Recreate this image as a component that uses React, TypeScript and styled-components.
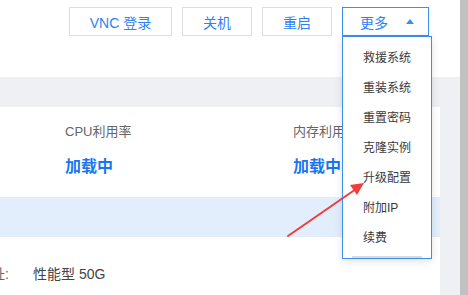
import React, { FC } from 'react';
import styled, { createGlobalStyle } from 'styled-components';

const GlobalStyle = createGlobalStyle`
  html, body {
    margin: 0;
    padding: 0;
    background: #fff;
  }
  body {
    font-family: "Liberation Sans", "Noto Sans CJK SC", sans-serif;
  }
`;

const menuItems = ['救援系统', '重装系统', '重置密码', '克隆实例', '升级配置', '附加IP', '续费'];

const stats = [
  { label: 'CPU利用率', value: '加载中' },
  { label: '内存利用率', value: '加载中' },
];

const App: FC = () => {
  return (
    <Page>
      <GlobalStyle />
      <Main>
        <Toolbar>
          <ActionButton $w={103}>VNC 登录</ActionButton>
          <ActionButton $w={70}>关机</ActionButton>
          <ActionButton $w={70}>重启</ActionButton>
          <MoreWrap>
            <ActionButton $w={87} $active>
              <span>更多</span>
              <Caret />
            </ActionButton>
            <Dropdown>
              {menuItems.map((m) => (
                <MenuItem key={m}>{m}</MenuItem>
              ))}
              <MenuThumb />
            </Dropdown>
          </MoreWrap>
        </Toolbar>
        <Card>
          <StatsRow>
            {stats.map((s) => (
              <Stat key={s.label}>
                <StatLabel>{s.label}</StatLabel>
                <StatValue>{s.value}</StatValue>
              </Stat>
            ))}
          </StatsRow>
          <Band />
          <DetailRow>
            <DetailLabel>地址:</DetailLabel>
            <DetailValue>性能型 50G</DetailValue>
          </DetailRow>
        </Card>
        <Arrow width="468" height="295" viewBox="0 0 468 295">
          <line x1="288" y1="236" x2="356" y2="189" stroke="#f23b3b" strokeWidth="2" strokeLinecap="round" />
          <polygon points="364,183 350,185 357,195" fill="#f23b3b" />
        </Arrow>
      </Main>
      <Scrollbar />
    </Page>
  );
};

const Page = styled.div`
  display: flex;
  width: 468px;
  height: 295px;
  overflow: hidden;
`;

const Main = styled.div`
  position: relative;
  width: 460px;
  background: #eef0f4;
  display: flex;
  flex-direction: column;
`;

const Scrollbar = styled.div`
  width: 8px;
  background: #c1c1c1;
`;

const Toolbar = styled.div`
  height: 77px;
  box-sizing: border-box;
  background: #fff;
  display: flex;
  justify-content: flex-end;
  align-items: flex-start;
  gap: 10px;
  padding: 7px 31px 0 0;
  margin-bottom: 30px;
`;

const ActionButton = styled.div<{ $active?: boolean; $w: number }>`
  box-sizing: border-box;
  height: 29px;
  width: ${(p) => p.$w}px;
  padding: ${(p) => (p.$active ? '0 14px 0 17px' : '0')};
  display: flex;
  align-items: center;
  justify-content: ${(p) => (p.$active ? 'space-between' : 'center')};
  border: 1px solid ${(p) => (p.$active ? '#3a8ef0' : '#dcdee2')};
  background: #fff;
  color: #2f7ff5;
  font-size: 14px;
  white-space: nowrap;
`;

const Caret = styled.span`
  width: 0;
  height: 0;
  border-left: 4px solid transparent;
  border-right: 4px solid transparent;
  border-bottom: 5px solid #3a8ef0;
`;

const MoreWrap = styled.div`
  position: relative;
`;

const Dropdown = styled.div`
  position: absolute;
  top: 29px;
  left: 0;
  width: 90px;
  box-sizing: border-box;
  background: #fff;
  border: 1px solid #3a8ef0;
  padding: 6px 0 0;
  box-shadow: 0 2px 8px rgba(0, 0, 0, 0.12);
  z-index: 2;
`;

const MenuItem = styled.div`
  height: 30px;
  line-height: 30px;
  padding-left: 20px;
  font-size: 12px;
  color: #3a3a3a;
  white-space: nowrap;
`;

const MenuThumb = styled.div`
  height: 2px;
  margin: 3px 9px 0;
  background: #dadada;
`;

const Card = styled.div`
  width: 440px;
  flex: 1;
  background: #fff;
  overflow: hidden;
`;

const StatsRow = styled.div`
  display: flex;
  padding: 15px 0 0 65px;
`;

const Stat = styled.div`
  width: 228px;
  flex-shrink: 0;
  display: flex;
  flex-direction: column;
  gap: 13px;
`;

const StatLabel = styled.div`
  font-size: 13px;
  line-height: 20px;
  color: #666;
`;

const StatValue = styled.div`
  font-size: 16px;
  line-height: 24px;
  font-weight: bold;
  color: #1a75f0;
`;

const Band = styled.div`
  height: 40px;
  margin-top: 18px;
  background: #e3eefc;
`;

const DetailRow = styled.div`
  display: flex;
  align-items: center;
  margin: 27px 0 0 -63px;
  font-size: 14px;
  line-height: 20px;
  color: #444;
`;

const DetailLabel = styled.div`
  width: 72px;
  text-align: right;
  color: #666;
`;

const DetailValue = styled.div`
  margin-left: 24px;
`;

const Arrow = styled.svg`
  position: absolute;
  left: 0;
  top: 0;
  pointer-events: none;
  z-index: 3;
`;

export default App;
